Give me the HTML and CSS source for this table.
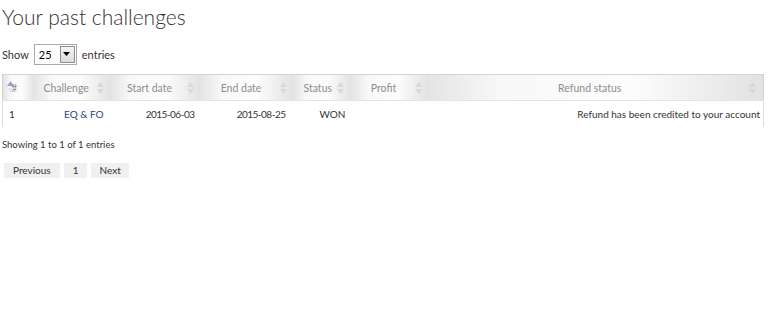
FILE: index.html
```html
<!DOCTYPE html>
<html>
<head>
<meta charset="utf-8">
<link rel="stylesheet" href="styles.css">
</head>
<body>
<h1 class="title">Your past challenges</h1>
<div class="length">
  <span>Show</span>
  <span class="select">
    <span class="select-value">25</span>
    <span class="select-btn"><svg width="8" height="5" viewBox="0 0 8 5"><path d="M0 0H7L3.5 4Z" fill="#000"/></svg></span>
  </span>
  <span>entries</span>
</div>
<table class="grid">
  <colgroup>
    <col class="c-num"><col class="c-chal"><col class="c-start"><col class="c-end"><col class="c-status"><col class="c-profit"><col class="c-refund">
  </colgroup>
  <thead>
    <tr>
      <th class="h-num sorted">#</th>
      <th>Challenge</th>
      <th>Start date</th>
      <th>End date</th>
      <th>Status</th>
      <th>Profit</th>
      <th>Refund status</th>
    </tr>
  </thead>
  <tbody>
    <tr>
      <td class="d-num">1</td>
      <td class="d-chal"><a>EQ &amp; FO</a></td>
      <td class="d-date">2015-06-03</td>
      <td class="d-date d-end">2015-08-25</td>
      <td class="d-status">WON</td>
      <td></td>
      <td class="d-refund">Refund has been credited to your account</td>
    </tr>
  </tbody>
</table>
<div class="info">Showing 1 to 1 of 1 entries</div>
<div class="pager">
  <span class="pbtn">Previous</span>
  <span class="pbtn">1</span>
  <span class="pbtn">Next</span>
</div>
</body>
</html>
```
FILE: styles.css
```css
html, body { margin: 0; padding: 0; background: #fff; }
body {
  font-family: Lato, "Open Sans", sans-serif;
  font-size: 11px;
  color: #333;
  padding: 0 2px;
}
.title {
  font-weight: 300;
  font-size: 21px;
  line-height: 26px;
  margin: 4px 0 0 0;
  color: #333;
}
.length {
  display: flex;
  align-items: center;
  gap: 5px;
  margin-top: 14px;
  height: 21px;
  color: #333;
}
.select {
  display: inline-flex;
  align-items: stretch;
  width: 43px;
  height: 21px;
  box-sizing: border-box;
  border: 1px solid #a9a9a9;
  background: #fff;
  padding: 1px;
}
.select-value { flex: 1; padding-left: 3px; line-height: 17px; color: #000; }
.select-btn {
  width: 15px;
  box-sizing: border-box;
  border: 1px solid #8e8e8e;
  background: linear-gradient(#f4f4f4, #dcdcdc);
  display: flex; align-items: center; justify-content: center;
}
.grid {
  border-collapse: collapse;
  table-layout: fixed;
  width: 762px;
  margin-top: 9px;
}
.c-num { width: 31px; }
.c-chal { width: 77px; }
.c-start { width: 90px; }
.c-end { width: 93px; }
.c-status { width: 57px; }
.c-profit { width: 78px; }
.c-refund { width: auto; }
.grid thead th {
  height: 25px;
  padding: 0 22px 0 10px;
  font-weight: 400;
  font-size: 10.5px;
  color: #8c8c8c;
  text-align: center;
  border-top: 1px solid #d3d3d3;
  border-bottom: 1px solid #e2e2e2;
  background: linear-gradient(90deg, #e4e4e4 0%, #f8f8f8 22%, #fcfcfc 60%, #e2e2e2 100%);
  background-color: #f2f2f2;
  position: relative;
  white-space: nowrap;
}
.grid thead th:first-child { border-left: 1px solid #d3d3d3; }
.grid thead th:last-child { border-right: 1px solid #d3d3d3; }
.grid thead th::after {
  content: "";
  position: absolute;
  right: 7px;
  top: 7px;
  width: 7px;
  height: 12px;
  background: url("data:image/svg+xml;utf8,<svg xmlns='http://www.w3.org/2000/svg' width='7' height='12'><path d='M3.5 0L7 5H0Z' fill='%23d8d8d8'/><path d='M3.5 12L7 7H0Z' fill='%23d8d8d8'/></svg>") no-repeat;
}
.grid thead th.h-num { padding: 0 0 0 8px; text-align: left; }
.grid thead th.h-num::after {
  left: 4px; right: auto; top: 6px;
  background: url("data:image/svg+xml;utf8,<svg xmlns='http://www.w3.org/2000/svg' width='7' height='12'><path d='M3.5 0L7 5H0Z' fill='%239c9cd8'/><path d='M3.5 12L7 7H0Z' fill='%23e4e4ee'/></svg>") no-repeat;
}
.grid tbody td {
  height: 26px;
  padding: 0 6px 0 6px;
  text-align: right;
  font-size: 10px;
  color: #333;
  white-space: nowrap;
}
.grid tbody td:first-child { border-left: 1px solid #ddd; }
.grid tbody td:last-child { border-right: 1px solid #ddd; }
.grid tbody td.d-num { text-align: left; padding-left: 6px; }
.grid tbody td.d-chal { padding-right: 7px; }
.grid tbody td.d-date { letter-spacing: -0.5px; }
.grid tbody td.d-end { padding-right: 8px; }
.grid tbody td.d-status { padding-right: 5px; }
.grid tbody td.d-refund { padding-right: 3px; }
.d-chal a { color: #1f3f7a; text-decoration: none; }
.info {
  margin-top: 11px;
  font-size: 9.5px;
  line-height: 14px;
  color: #333;
}
.pager {
  display: flex;
  gap: 4px;
  margin-top: 11px;
  padding-left: 2px;
}
.pbtn {
  background: #f0f0f0;
  color: #333;
  font-size: 10px;
  line-height: 15px;
  padding: 0 9px;
}
.pbtn:last-child { padding: 0 8px; }
```
